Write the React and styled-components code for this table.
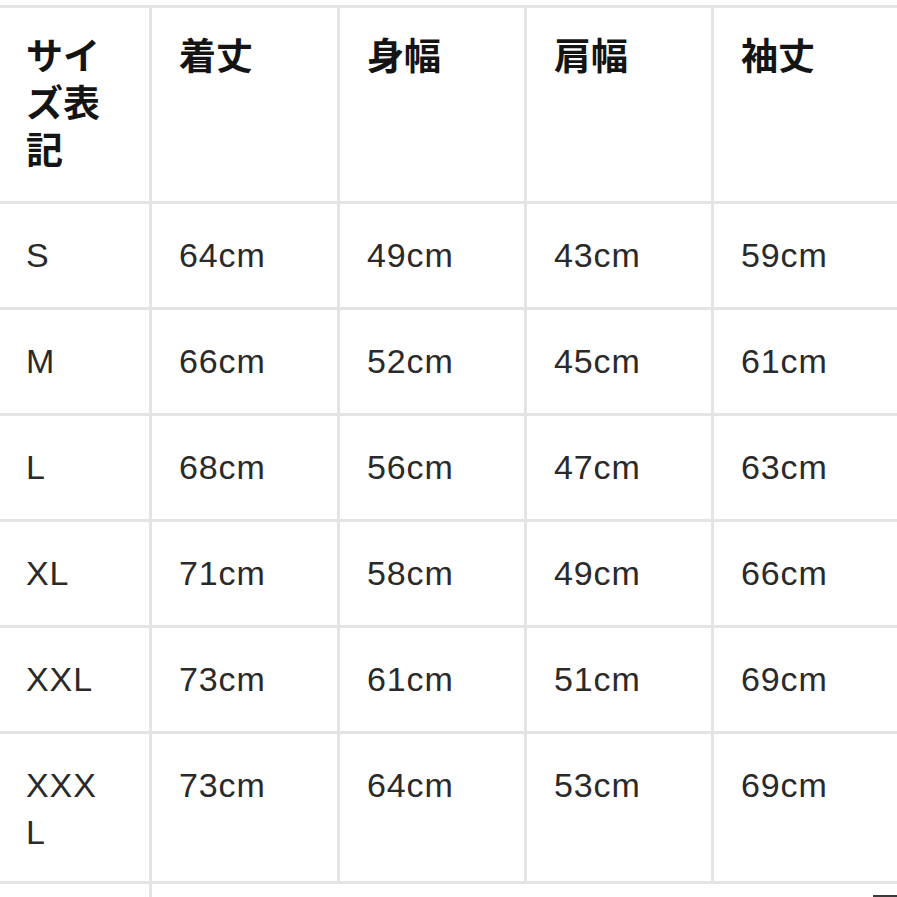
import React from 'react';
import styled, { createGlobalStyle } from 'styled-components';

const GlobalStyle = createGlobalStyle`
  html, body {
    margin: 0;
    padding: 0;
    background: #ffffff;
    overflow: hidden;
  }
`;

const Page = styled.div`
  width: 897px;
  height: 897px;
  overflow: hidden;
  padding-top: 5px;
  box-sizing: border-box;
  background: #ffffff;
`;

const Table = styled.div`
  display: grid;
  grid-template-columns: 149px 185px 184px 184px 1fr;
  grid-template-rows: 193px repeat(5, 103px) 147px 40px;
  gap: 3px;
  padding-top: 3px;
  background: #e4e4e4;
  font-family: "Liberation Sans", Arial, "Noto Sans CJK JP", sans-serif;
`;

const Cell = styled.div`
  background: #ffffff;
  box-sizing: border-box;
  padding: ${p => (p.$head ? '26px' : '28px')} ${p => (p.$first ? '40px' : '10px')} 0 ${p => (p.$first ? '26px' : '27px')};
  font-size: ${p => (p.$head ? '37px' : '34px')};
  font-weight: ${p => (p.$head ? 700 : 400)};
  letter-spacing: ${p => (p.$head ? '0' : '0.9px')};
  line-height: 47px;
  color: ${p => (p.$head ? '#141414' : '#2a2a2a')};
  word-break: break-all;
`;

const TailCell = styled.div`
  background: #ffffff;
  grid-column: ${p => (p.$span ? '2 / 6' : 'auto')};
  display: flex;
  justify-content: flex-end;
  align-items: flex-start;
`;

const Dash = styled.span`
  display: block;
  width: 24px;
  height: 2px;
  margin-top: 11px;
  background: #3a3a3a;
`;

const headers = ['サイズ表記', '着丈', '身幅', '肩幅', '袖丈'];

const rows = [
  ['S', '64cm', '49cm', '43cm', '59cm'],
  ['M', '66cm', '52cm', '45cm', '61cm'],
  ['L', '68cm', '56cm', '47cm', '63cm'],
  ['XL', '71cm', '58cm', '49cm', '66cm'],
  ['XXL', '73cm', '61cm', '51cm', '69cm'],
  ['XXXL', '73cm', '64cm', '53cm', '69cm'],
];

const App = () => {
  return (
    <>
      <GlobalStyle />
      <Page>
        <Table>
          {headers.map((h, i) => (
            <Cell key={h} $head $first={i === 0}>{h}</Cell>
          ))}
          {rows.map(row =>
            row.map((val, i) => (
              <Cell key={row[0] + i} $first={i === 0}>{val}</Cell>
            ))
          )}
          <TailCell />
          <TailCell $span>
            <Dash />
          </TailCell>
        </Table>
      </Page>
    </>
  );
};

export default App;
